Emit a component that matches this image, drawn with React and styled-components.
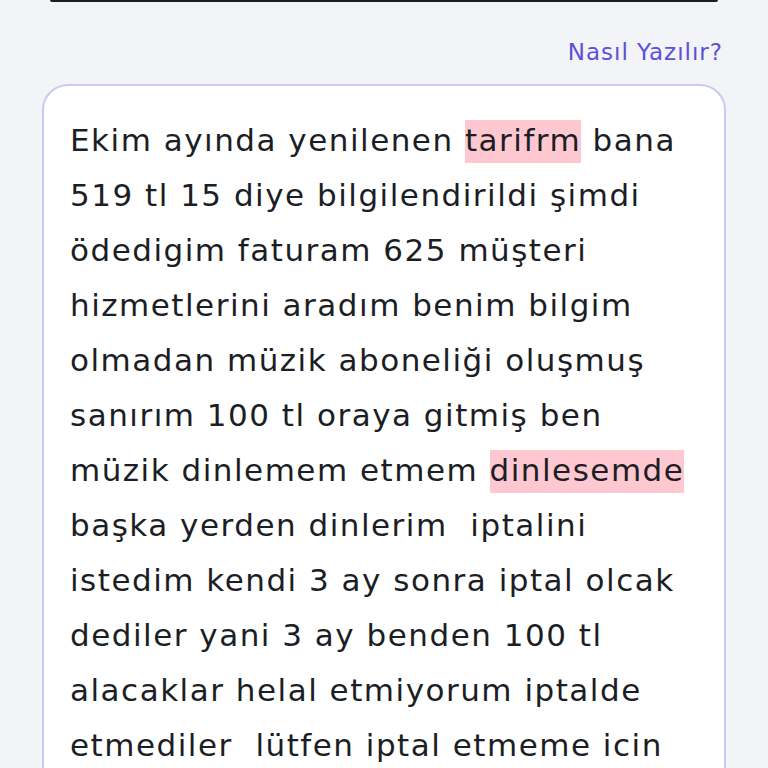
import styled, { createGlobalStyle } from "styled-components";

const GlobalStyle = createGlobalStyle`
  html, body {
    margin: 0;
    padding: 0;
    background: #f2f4f8;
  }
  body {
    font-family: "DejaVu Sans", "Liberation Sans", sans-serif;
    overflow: hidden;
  }
`;

const Page = styled.div`
  width: 768px;
  height: 768px;
  overflow: hidden;
  box-sizing: border-box;
  padding: 0 42px;
  display: flex;
  flex-direction: column;
  & > * {
    flex-shrink: 0;
  }
`;

const TopBar = styled.div`
  height: 2px;
  margin: 0 8px;
  background: #1c1d22;
  border-radius: 0 0 3px 3px;
`;

const HelpRow = styled.div`
  display: flex;
  justify-content: flex-end;
  padding: 35px 3px 0 0;
  height: 48px;
  box-sizing: border-box;
`;

const HelpLink = styled.a`
  font-size: 23px;
  line-height: 30px;
  color: #5b51d8;
  text-decoration: none;
  letter-spacing: 1px;
`;

const Card = styled.div`
  margin-top: 34px;
  background: #ffffff;
  border: 2px solid #c9c9f2;
  border-radius: 26px;
  padding: 27px 26px 40px;
  box-sizing: border-box;
`;

const Line = styled.div`
  white-space: pre;
  font-size: 31px;
  line-height: 55px;
  color: #1c1e25;
  letter-spacing: 1.5px;
`;

const Mark = styled.span`
  background: #ffc8d0;
  padding: 2px 0 5px;
`;

const lines = [
  ["Ekim ayında yenilenen ", "tarifrm", " bana"],
  ["519 tl 15 diye bilgilendirildi şimdi"],
  ["ödedigim faturam 625 müşteri"],
  ["hizmetlerini aradım benim bilgim"],
  ["olmadan müzik aboneliği oluşmuş"],
  ["sanırım 100 tl oraya gitmiş ben"],
  ["müzik dinlemem etmem ", "dinlesemde", ""],
  ["başka yerden dinlerim  iptalini"],
  ["istedim kendi 3 ay sonra iptal olcak"],
  ["dediler yani 3 ay benden 100 tl"],
  ["alacaklar helal etmiyorum iptalde"],
  ["etmediler  lütfen iptal etmeme icin"],
];

export default function App() {
  return (
    <Page>
      <GlobalStyle />
      <TopBar />
      <HelpRow>
        <HelpLink href="#">Nasıl Yazılır?</HelpLink>
      </HelpRow>
      <Card>
        {lines.map((l, i) => (
          <Line key={i}>
            {l[0]}
            {l[1] && <Mark>{l[1]}</Mark>}
            {l[2]}
          </Line>
        ))}
      </Card>
    </Page>
  );
}
